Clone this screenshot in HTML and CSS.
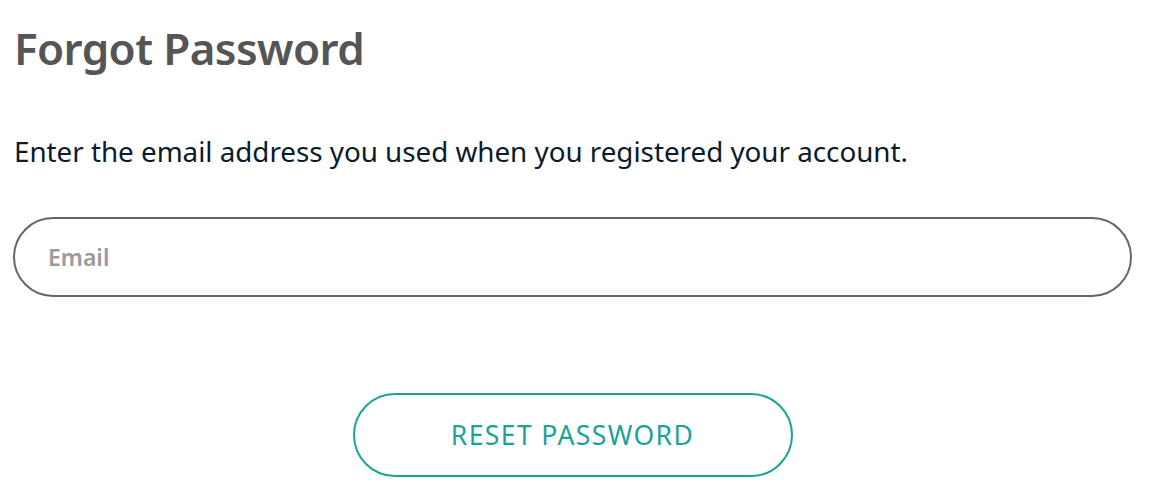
FILE: index.html
```html
<!DOCTYPE html>
<html lang="en">
<head>
<meta charset="utf-8">
<title>Forgot Password</title>
<link rel="stylesheet" href="styles.css">
</head>
<body>
<main class="page">
  <h1 class="title">Forgot Password</h1>
  <p class="lead">Enter the email address you used when you registered your account.</p>
  <form class="form">
    <input class="field" type="email" placeholder="Email">
    <div class="actions">
      <button class="btn" type="button">RESET PASSWORD</button>
    </div>
  </form>
</main>
</body>
</html>
```
FILE: styles.css
```css
html, body {
  margin: 0;
  padding: 0;
  background: #fff;
}
body {
  font-family: "Noto Sans", "Open Sans", sans-serif;
}
.page {
  padding: 20px 18px 0 13px;
}
.title {
  margin: 0 0 0 1px;
  font-size: 44px;
  font-weight: 600;
  color: #555555;
  line-height: 56px;
  letter-spacing: -0.6px;
}
.lead {
  margin: 57px 0 0 1px;
  font-size: 27.8px;
  line-height: 36px;
  color: #0b1b2b;
  letter-spacing: -0.02px;
}
.form {
  margin-top: 48px;
}
.field {
  display: block;
  box-sizing: border-box;
  width: 100%;
  height: 80px;
  border: 2px solid #666;
  border-radius: 40px;
  padding: 0 33px;
  font-family: inherit;
  font-size: 23px;
  font-weight: 600;
  color: #333;
  outline: none;
  background: #fff;
}
.field::placeholder {
  color: #9a9a9a;
}
.actions {
  display: flex;
  justify-content: center;
  margin-top: 96px;
}
.btn {
  box-sizing: border-box;
  width: 440px;
  height: 84px;
  border: 2px solid #1aa396;
  border-radius: 42px;
  background: #fff;
  color: #1aa396;
  font-family: inherit;
  font-size: 26.5px;
  font-weight: 400;
  letter-spacing: 1.4px;
  padding: 0;
  cursor: pointer;
}
```
